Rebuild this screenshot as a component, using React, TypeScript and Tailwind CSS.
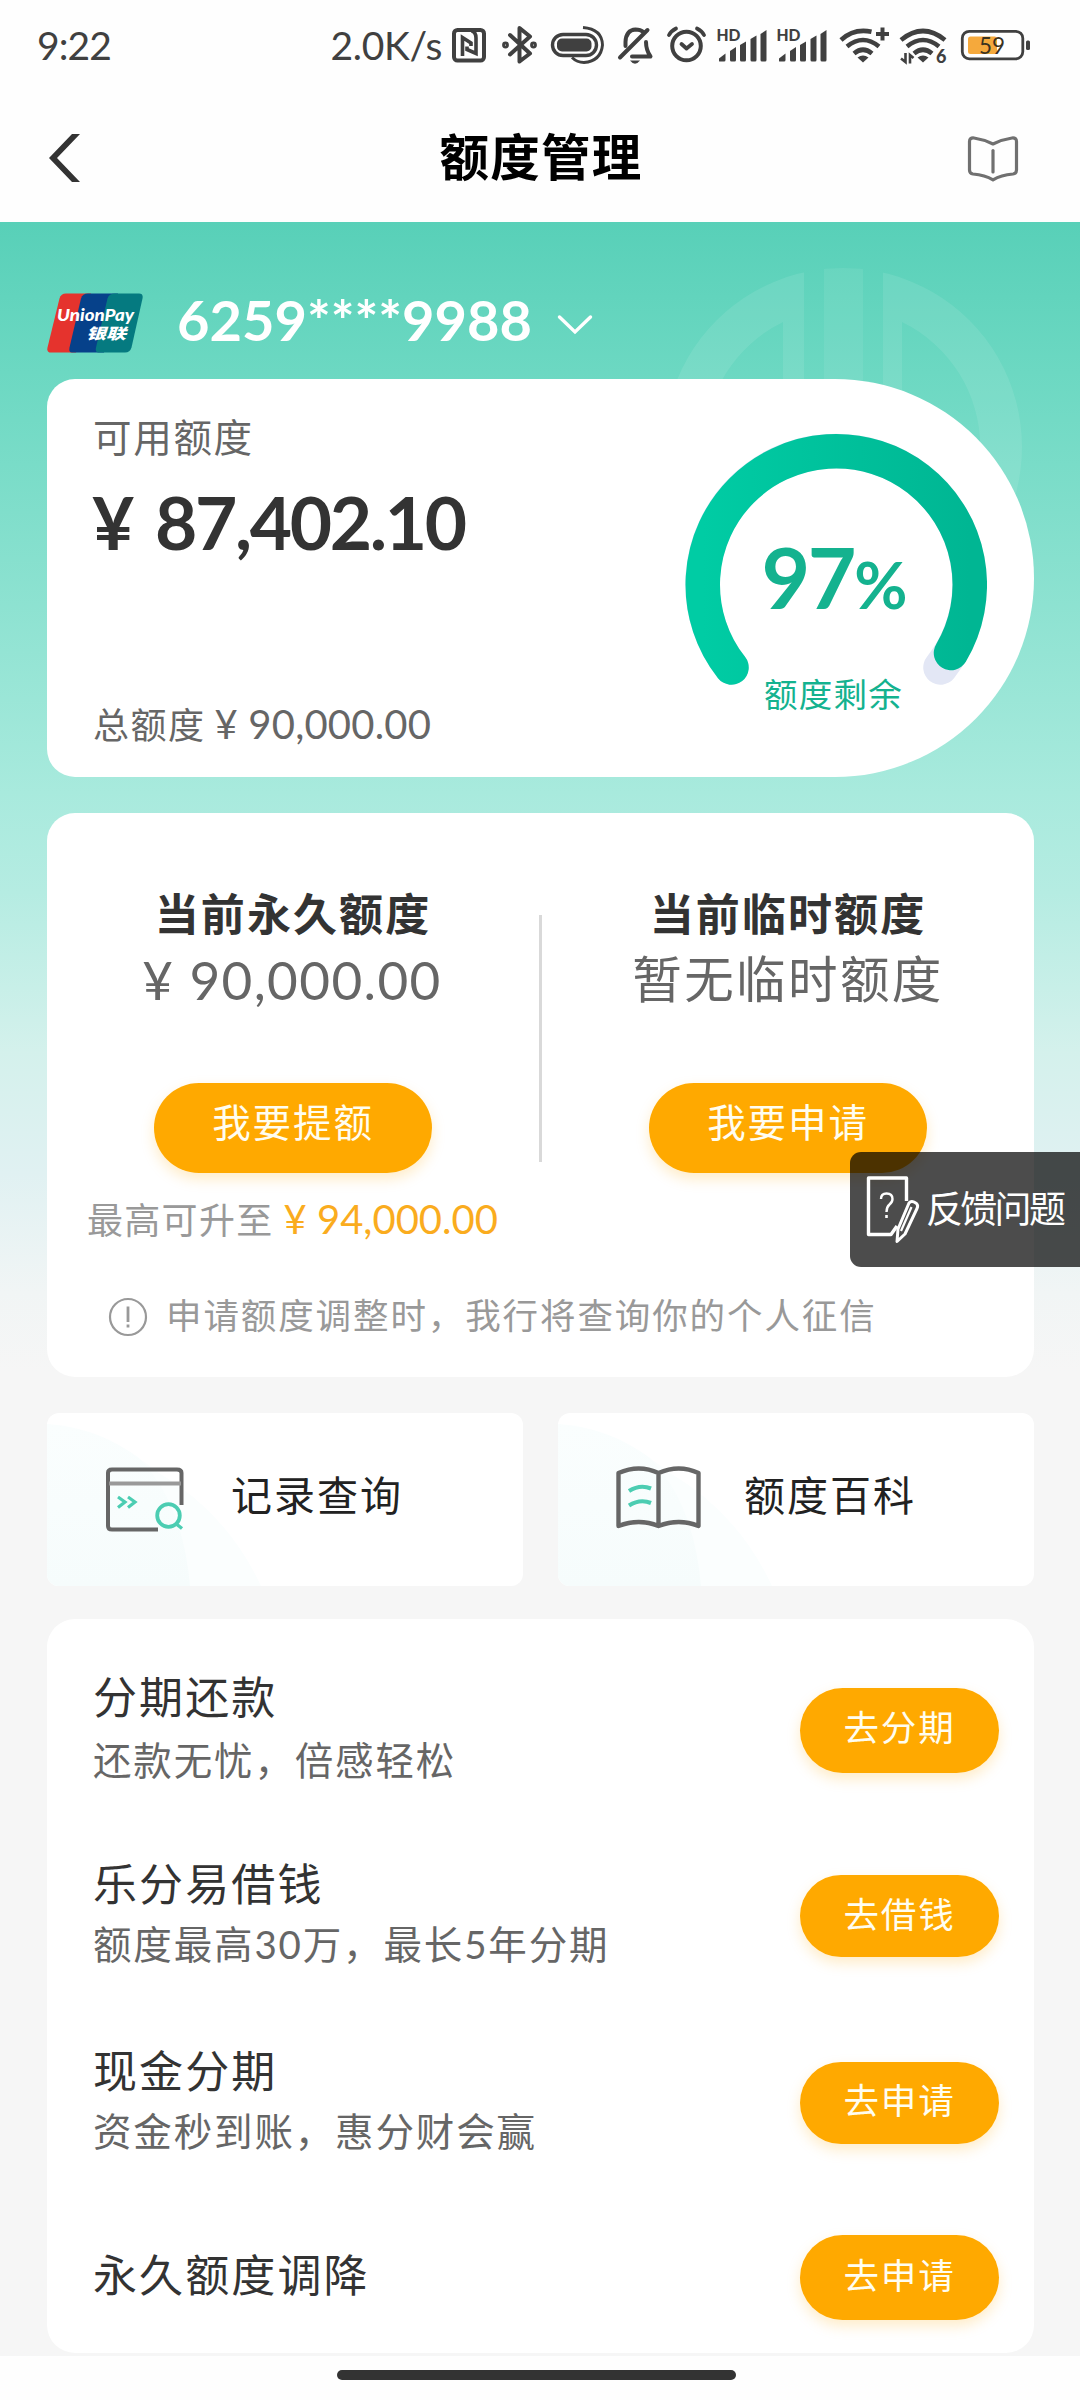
import React from "react";

const FONT = "font-[Lato,'Noto_Sans_CJK_SC',sans-serif]";
const INK = "#404040";

function Signal() {
  return (
    <svg className="h-[90px] w-[60px] shrink-0" viewBox="713 0 60 90" fill={INK}>
      <text x="716.5" y="41.3" fontSize="17.5" fontWeight="900" textLength="24" lengthAdjust="spacingAndGlyphs">HD</text>
      <path d="M719 61 V58.5 L725.5 53.5 V60 Q725.5 61.5 724 61.5 H720 Q719 61.5 719 61Z" />
      <path d="M730 60 V51 L736 47 V60 Q736 61.5 734.5 61.5 H731.5 Q730 61.5 730 60Z" />
      <path d="M740 60 V45 L746 41.5 V60 Q746 61.5 744.5 61.5 H741.5 Q740 61.5 740 60Z" />
      <path d="M750.5 60 V39 L756.5 35.5 V60 Q756.5 61.5 755 61.5 H752 Q750.5 61.5 750.5 60Z" />
      <path d="M760.5 60 V34 L766.5 30 V60 Q766.5 61.5 765 61.5 H762 Q760.5 61.5 760.5 60Z" />
    </svg>
  );
}

function StatusBar() {
  return (
    <div className="flex h-[90px] shrink-0 items-center text-[39px] leading-[90px] text-[#404040]">
      <span className="ml-[37px] w-[130px] tracking-[-0.9px]">9:22</span>
      <span className="ml-auto tracking-[-0.3px]">2.0K/s</span>
      {/* NFC */}
      <svg className="ml-[6px] h-[90px] w-[46px] shrink-0" viewBox="448 0 46 90" fill="none" stroke={INK} strokeWidth="4">
        <rect x="454" y="30" width="30" height="30.5" rx="3.5" />
        <path d="M462.500 56 V37.500 L471 43 V46" strokeWidth="3.600" />
        <path d="M467 46.500 V49.500 L476 53.500 V38 Q476 32 471.500 31" strokeWidth="3.600" />
      </svg>
      {/* Bluetooth */}
      <svg className="h-[90px] w-[50px] shrink-0" viewBox="494 0 50 90" fill="none" stroke={INK} strokeWidth="4" strokeLinejoin="round" strokeLinecap="round">
        <path d="M510 35 L530 53.500 L519.500 61.500 V28 L530 36.500 L510 54.500" />
        <circle cx="505.500" cy="45" r="1.400" />
        <circle cx="533.500" cy="45" r="1.400" />
      </svg>
      {/* Power ring */}
      <svg className="h-[90px] w-[66px] shrink-0" viewBox="544 0 66 90" fill="none" stroke={INK}>
        <rect x="552.500" y="34.500" width="44" height="21" rx="10.500" strokeWidth="3.400" />
        <rect x="557" y="38.500" width="34.500" height="13" rx="5" fill={INK} stroke="none" />
        <path d="M583 27.500 Q602 29 602.500 45 Q601 61 584 62.500 Q577 62.500 572 57.500" strokeWidth="2.900" />
      </svg>
      {/* Muted bell */}
      <svg className="h-[90px] w-[50px] shrink-0" viewBox="610 0 50 90" fill="none" stroke={INK} strokeWidth="4" strokeLinecap="round" strokeLinejoin="round">
        <path d="M625.500 46 V42 Q626 30 635.500 29.500 Q640.500 29.500 643.500 32" />
        <path d="M646 42 Q646 50 650.500 56.500 H632" />
        <path d="M620 57.500 L647.500 30" />
        <path d="M630 60.500 H640 Q635 67 630 60.500Z" fill={INK} stroke="none" />
      </svg>
      {/* Alarm */}
      <svg className="h-[90px] w-[53px] shrink-0" viewBox="660 0 53 90" fill="none" stroke={INK} strokeWidth="4" strokeLinecap="round" strokeLinejoin="round">
        <circle cx="686.500" cy="46" r="14.300" />
        <path d="M681.500 44 L686.500 48.500 L692 44" strokeWidth="3.800" />
        <path d="M669 35 Q671 31 676 28.500 M704 35 Q702 31 697 28.500" strokeWidth="3.800" />
      </svg>
      <Signal />
      <Signal />
      {/* Wi-Fi plus */}
      <svg className="h-[90px] w-[61px] shrink-0" viewBox="833 0 61 90" fill="none" stroke={INK} strokeWidth="4.600">
        <path d="M841 40 Q854 28 871.500 31.800" />
        <path d="M847 46.500 Q863 33.500 879 46.500" />
        <path d="M854 53.500 Q863 46 872 53.500" />
        <path d="M857.500 57.500 Q863 53.500 868.500 57.500 L863 62.500Z" fill={INK} stroke="none" />
        <path d="M882.500 27.500 V40.500 M876 34 H889" strokeWidth="4" />
      </svg>
      {/* Wi-Fi 6 */}
      <svg className="h-[90px] w-[60px] shrink-0" viewBox="894 0 60 90" fill="none" stroke={INK} strokeWidth="4.600">
        <path d="M901 40 Q923 22 945 40" />
        <path d="M907 46.500 Q923 33.500 939 46.500" />
        <path d="M914 53.500 Q923 46 932 53.500" />
        <path d="M917.500 57.500 Q923 53.500 928.500 57.500 L923 62.500Z" fill={INK} stroke="none" />
        <path d="M905.500 53 V62 L901 58.500 M910 63.500 V55 L913.500 58" strokeWidth="2.600" />
        <text x="936" y="62.500" fontSize="18" fontWeight="900" fill={INK} stroke="none">6</text>
      </svg>
      {/* Battery */}
      <svg className="mr-[46px] h-[90px] w-[80px] shrink-0" viewBox="954 0 80 90">
        <rect x="962.300" y="31.300" width="60.500" height="27.500" rx="7" fill="none" stroke={INK} strokeWidth="2.800" />
        <rect x="968" y="36.500" width="29" height="17.500" rx="2.500" fill="#f5a93c" />
        <rect x="1026" y="40.500" width="4" height="9.500" rx="1.500" fill={INK} />
        <text x="979" y="53.800" fontSize="24" fill="#3a3220" textLength="26" lengthAdjust="spacingAndGlyphs">59</text>
      </svg>
    </div>
  );
}

function NavBar() {
  return (
    <div className="grid h-[132px] shrink-0 grid-cols-[1fr_auto_1fr] items-center">
      <svg className="ml-[45px] h-[132px] w-[40px]" viewBox="45 90 40 132">
        <path d="M72 134 H80 L57 158 L80 182 H72 L49 158Z" fill="#333" />
      </svg>
      <h1 className="translate-x-[1px] translate-y-[1px] text-[49.500px] leading-[132px] font-bold tracking-[1.300px] text-black">额度管理</h1>
      <svg className="mr-[58px] h-[132px] w-[60px] justify-self-end" viewBox="962 90 60 132" fill="none" stroke="#707070" strokeWidth="3.200" strokeLinejoin="round" strokeLinecap="round">
        <path d="M993 144 Q984 139.500 974 138 Q969.500 137.500 969.500 141.500 V170 Q969.500 173.500 973 174 Q985 175 993 179.800 Q1001 175 1013 174 Q1016.500 173.500 1016.500 170 V141.500 Q1016.500 137.500 1012 138 Q1002 139.500 993 144Z" />
        <path d="M993 150.500 V172" />
      </svg>
    </div>
  );
}

function UnionPay() {
  return (
    <svg className="h-[60px] w-[96px] shrink-0" viewBox="47 293 96 60">
      <path d="M66 293.500 H91 L76 352.500 H51 Q46.500 352.500 47.500 347.500 L59.500 298.500 Q61 293.500 66 293.500Z" fill="#e5332d" />
      <path d="M88 293.500 H118 L104 352.500 H72 Q68.500 352.500 69.500 347.500 L81 298.500 Q82.500 293.500 88 293.500Z" fill="#06418a" />
      <path d="M115 293.500 H139 Q143.500 293.500 142.500 298.500 L131.500 347.500 Q130 352.500 125 352.500 H98.500 Q95 352.500 96 347.500 L107.500 298.500 Q109 293.500 115 293.500Z" fill="#057a80" />
      <text x="57" y="321" fontSize="17.500" fontWeight="900" fontStyle="italic" fill="#fff" textLength="77" lengthAdjust="spacingAndGlyphs">UnionPay</text>
      <text x="86" y="339" fontSize="15" fontWeight="900" fontStyle="italic" fill="#fff" textLength="40" lengthAdjust="spacingAndGlyphs">银联</text>
    </svg>
  );
}

function Watermark() {
  return (
    <svg className="absolute top-[46px] left-[660px] h-[362px] w-[370px]" viewBox="660 268 370 362">
      <defs>
        <clipPath id="wm">
          <path d="M660 268 H804 V630 H660Z M883 268 H1030 V630 H883Z" />
        </clipPath>
        <clipPath id="disc">
          <circle cx="843" cy="447" r="179" />
        </clipPath>
      </defs>
      <g fill="#fff">
        <path
          clipPath="url(#wm)"
          fillRule="evenodd"
          fillOpacity="0.09"
          d="M843 268 a179 179 0 1 0 0.010 0Z M783 322 A139 139 0 0 0 783 572Z M902 322 A139 139 0 0 1 902 572Z"
        />
        <rect x="824" y="268" width="39" height="358" clipPath="url(#disc)" fillOpacity="0.07" />
      </g>
    </svg>
  );
}

function Gauge() {
  return (
    <div className="relative mr-[47px] h-full w-[302px] shrink-0">
      <svg className="h-[398px] w-[302px]" viewBox="685 379 302 398" fill="none" strokeWidth="34.500" strokeLinecap="round">
        <defs>
          <linearGradient id="arc" x1="0" y1="0" x2="1" y2="0">
            <stop offset="0" stopColor="#00cca4" />
            <stop offset="1" stopColor="#00b693" />
          </linearGradient>
        </defs>
        <path d="M731.500 667.500 A133.500 133.500 0 1 1 940.500 667.500" stroke="#e3e7f5" />
        <path d="M731.500 667.500 A133.500 133.500 0 1 1 951 653" stroke="url(#arc)" />
      </svg>
      <div className="absolute inset-x-0 top-[153px] text-center text-[#14b28f]">
        <div className="flex items-baseline justify-center pr-[5px] leading-[90px] font-bold">
          <span className="text-[84px] tracking-[-2.300px]">97</span>
          <span className="text-[65px] tracking-[-2px]">%</span>
        </div>
        <div className="mt-[43px] pr-[5px] text-[33.500px] leading-[44px] tracking-[1.200px]">额度剩余</div>
      </div>
    </div>
  );
}

function OrangeButton({ label, className }: { label: string; className: string }) {
  return (
    <button className={`shrink-0 rounded-full bg-[#ffa900] text-center text-[#fffdf0] shadow-[0_6px_14px_rgba(255,170,0,0.22)] ${className}`}>
      {label}
    </button>
  );
}

function LimitCard() {
  return (
    <section className="mt-[26px] flex h-[398px] justify-between rounded-l-[28px] rounded-r-[199px] bg-white">
      <div className="flex flex-col pl-[46px] text-[#666]">
        <span className="mt-[33px] text-[38.500px] leading-[50px] tracking-[1.700px]">可用额度</span>
        <span className="mt-[12px] ml-[-1px] flex text-[73px] leading-[96px] font-bold text-[#333]">
          <span className="w-[63px]">¥</span>
          <span className="tracking-[-2.350px]">87,402.10</span>
        </span>
        <span className="mt-[129px] flex items-baseline text-[36px] leading-[50px] tracking-[1.500px]">
          总额度
          <span className="ml-[9px] text-[40px] tracking-[0.200px]">¥ 90,000.00</span>
        </span>
      </div>
      <Gauge />
    </section>
  );
}

function QuotaCard() {
  return (
    <section className="mt-[36px] flex h-[564px] flex-col rounded-[28px] bg-white">
      <div className="flex h-[372px] shrink-0 items-start">
        <div className="flex flex-1 flex-col items-center">
          <h2 className="mt-[71px] text-[44px] leading-[60px] font-bold tracking-[2.100px] text-[#333]">当前永久额度</h2>
          <p className="mt-[6px] -translate-x-[1px] text-[53px] leading-[60px] tracking-[1.400px] text-[#666]">¥ 90,000.00</p>
          <OrangeButton label="我要提额" className="mt-[73px] h-[90px] w-[278px] pb-[12px] text-[38.500px] leading-[78px] tracking-[1.900px]" />
        </div>
        <div className="mt-[102px] h-[247px] w-[3px] bg-[#d9d9d9]" />
        <div className="flex flex-1 flex-col items-center">
          <h2 className="mt-[71px] text-[44px] leading-[60px] font-bold tracking-[2.100px] text-[#333]">当前临时额度</h2>
          <p className="mt-[5px] text-[49.500px] leading-[60px] tracking-[2.400px] text-[#666]">暂无临时额度</p>
          <OrangeButton label="我要申请" className="mt-[74px] h-[90px] w-[278px] pb-[12px] text-[38.500px] leading-[78px] tracking-[1.900px]" />
        </div>
      </div>
      <p className="mt-[8px] ml-[40px] flex items-baseline text-[36px] leading-[52px] tracking-[1.300px] text-[#999]">
        最高可升至
        <span className="ml-[10px] text-[40px] tracking-[0px] text-[#faac1e]">¥ 94,000.00</span>
      </p>
      <div className="mt-[44px] ml-[60px] flex items-center text-[35.500px] leading-[52px] tracking-[1.900px] text-[#999]">
        <svg className="mr-[17px] h-[42px] w-[42px] translate-y-[1px]" viewBox="0 0 42 42" fill="none" stroke="#999" strokeWidth="2.200">
          <circle cx="21" cy="21" r="18" />
          <path d="M21 10.500 V26" strokeWidth="2.800" />
          <path d="M21 28.500 V31.500" strokeWidth="2.800" />
        </svg>
        申请额度调整时，我行将查询你的个人征信
      </div>
    </section>
  );
}

function TileTint() {
  return (
    <svg className="absolute inset-0 h-full w-full" viewBox="0 0 476 173">
      <defs>
        <linearGradient id="tint" x1="0" y1="0" x2="0" y2="1">
          <stop offset="0" stopColor="#fafefe" />
          <stop offset="1" stopColor="#f6fcfc" />
        </linearGradient>
      </defs>
      <path d="M0 11 Q60 18 112 60 Q180 100 214 173 H0Z" fill="#fbfefe" />
      <path d="M0 11 Q50 14 92 45 Q136 90 143 173 H0Z" fill="url(#tint)" />
    </svg>
  );
}

function Tiles() {
  return (
    <section className="mt-[36px] flex justify-between text-[41px] leading-[56px] tracking-[2px] text-[#222]">
      <div className="relative flex h-[173px] w-[476px] items-center overflow-hidden rounded-[12px] bg-white">
        <TileTint />
        <svg className="relative ml-[55px] h-[70px] w-[90px] -translate-y-[2px]" viewBox="103 1463 90 70" fill="none">
          <path d="M159 1529.500 H113 Q109 1529.500 109 1526 V1473 Q109 1469.500 113 1469.500 H178 Q182.500 1469.500 182.500 1473 V1505" stroke="#666" strokeWidth="4" />
          <path d="M110 1483.500 H182" stroke="#999" strokeWidth="3.800" />
          <path d="M119 1497 L126 1502 L119 1507.500 M129 1497 L136 1502 L129 1507.500" stroke="#4ccdb2" strokeWidth="3.200" />
          <circle cx="169.500" cy="1515.500" r="11.300" stroke="#4ccdb2" strokeWidth="3.800" />
          <path d="M176 1523 L183 1528.500" stroke="#4ccdb2" strokeWidth="3.400" />
        </svg>
        <span className="relative ml-[39px] -translate-y-[4px]">记录查询</span>
      </div>
      <div className="relative flex h-[173px] w-[476px] items-center overflow-hidden rounded-[12px] bg-white">
        <TileTint />
        <svg className="relative ml-[53px] h-[70px] w-[94px] -translate-y-[2px]" viewBox="612 1463 94 70" fill="none" strokeLinejoin="round">
          <path d="M659.500 1473 Q640 1464 619.500 1473 V1526 Q640 1518 659.500 1526 Q680 1518 699.500 1526 V1473 Q680 1464 659.500 1473 V1526" stroke="#666" strokeWidth="4.400" />
          <path d="M630 1491 Q641 1484 652 1488.500 M630 1505.500 Q641 1498.500 652 1503" stroke="#4ccdb2" strokeWidth="4.200" />
        </svg>
        <span className="relative ml-[39px] -translate-y-[4px]">额度百科</span>
      </div>
    </section>
  );
}

const services = [
  { title: "分期还款", desc: "还款无忧，倍感轻松", action: "去分期", gap: "mt-[3px]", button: "mt-[33px] h-[85px] leading-[80px] pb-[5px]" },
  { title: "乐分易借钱", desc: "额度最高30万，最长5年分期", action: "去借钱", gap: "mt-0", button: "mt-[33px] h-[82px] leading-[80px] pb-[2px]" },
  { title: "现金分期", desc: "资金秒到账，惠分财会赢", action: "去申请", gap: "mt-0", button: "mt-[33px] h-[82px] leading-[77px] pb-[5px]" },
  { title: "永久额度调降", desc: "", action: "去申请", gap: "", button: "mt-[19px] h-[85px] leading-[81px] pb-[4px]" },
];

function Services() {
  return (
    <section className="mt-[33px] h-[734px] shrink-0 rounded-[28px] bg-white pt-[36px] pr-[35px] pl-[46px]">
      {services.map((s, i) => (
        <div key={s.title} className={i < 3 ? "flex h-[187px] items-start justify-between" : "flex items-start justify-between"}>
          <div className={i < 3 ? "pt-[12px]" : "pt-[29px]"}>
            <h3 className="text-[44px] leading-[60px] tracking-[2.100px] text-[#333]">{s.title}</h3>
            {s.desc && <p className={`text-[38.500px] leading-[60px] tracking-[1.850px] text-[#666] ${s.gap}`}>{s.desc}</p>}
          </div>
          <OrangeButton label={s.action} className={`w-[199px] text-[35.500px] tracking-[1.800px] ${s.button}`} />
        </div>
      ))}
    </section>
  );
}

function Feedback() {
  return (
    <div className="absolute top-[1152px] right-0 flex h-[115px] w-[230px] items-center rounded-l-[11px] bg-black/70">
      <svg className="ml-[14px] h-[76px] w-[60px] shrink-0" viewBox="864 1174 60 76" fill="none" stroke="#fff" strokeWidth="3" strokeLinejoin="round">
        <path d="M906.500 1203 V1180 H868.500 V1236.500 H891 L897 1228" strokeWidth="3.400" />
        <path d="M881 1201 Q881 1195.500 886.500 1195.500 Q892.500 1195.500 892.500 1201 Q892.500 1204 889.500 1206.500 Q886.500 1209 886.500 1214" strokeWidth="2.400" />
        <path d="M886.500 1217 V1220" strokeWidth="2.600" />
        <path d="M909 1205 Q911 1202.500 914 1204 L916.500 1205.500 Q918.500 1207.500 917 1210.500 L905 1236 L897 1243.500 L898 1231Z" />
        <path d="M911.500 1209 L901 1233" strokeWidth="2.200" />
      </svg>
      <span className="ml-[2px] -translate-y-[1px] text-[37px] leading-[115px] tracking-[-2.700px] whitespace-nowrap text-white">反馈问题</span>
    </div>
  );
}

export default function App() {
  return (
    <div className={`relative flex h-[2400px] w-[1080px] flex-col overflow-hidden bg-[#fefefe] ${FONT}`}>
      <StatusBar />
      <NavBar />
      <main className="relative flex h-[2134px] shrink-0 flex-col bg-[#f6f6f6] bg-[linear-gradient(to_bottom,#58d0b8_0px,#6cd8c2_150px,#a8eadd_570px,#b5ece2_670px,#d4f1ec_830px,#e0f1f2_950px,#f1f5f5_1070px,#f6f6f6_1150px)] pr-[46px] pl-[47px]">
        <Watermark />
        <div className="relative flex flex-col">
          <div className="mt-[71px] flex h-[60px] items-center">
            <UnionPay />
            <span className="ml-[34px] -translate-y-[3px] text-[56px] leading-[60px] font-bold text-white">6259****9988</span>
            <svg className="ml-[25px] h-[26px] w-[36px] translate-y-[1px]" viewBox="557 312 36 26" fill="none" stroke="#fff" strokeWidth="3.400" strokeLinecap="round">
              <path d="M559.500 318 L575 333 L590.500 318" />
            </svg>
          </div>
          <LimitCard />
          <QuotaCard />
          <Tiles />
          <Services />
        </div>
      </main>
      <div className="flex h-[44px] items-start justify-center pt-[14px] pr-[7px]">
        <div className="h-[10px] w-[399px] rounded-full bg-[#333]" />
      </div>
      <Feedback />
    </div>
  );
}
